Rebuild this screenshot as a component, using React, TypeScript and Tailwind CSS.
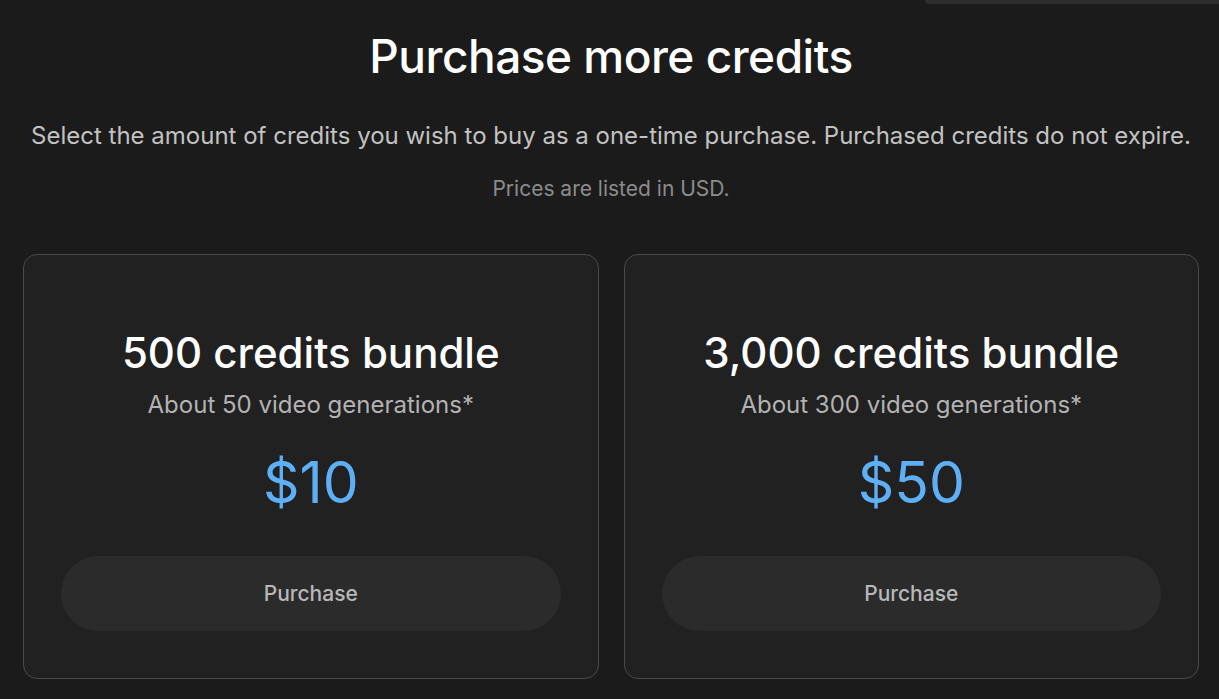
import React from "react";

const bundles = [
  { title: "500 credits bundle", sub: "About 50 video generations*", price: "$10" },
  { title: "3,000 credits bundle", sub: "About 300 video generations*", price: "$50" },
];

export default function App() {
  return (
    <div className="min-h-[699px] bg-[#1b1b1b] font-['Inter',sans-serif] overflow-hidden">
      {/* strip of an element scrolled above */}
      <div className="ml-auto w-[294px] h-[4px] bg-[#2e2e2e] rounded-bl-[6px]" />

      <div className="ml-[23px] w-[1176px] flex flex-col items-center">
        <h1 className="mt-[24px] text-[46px] leading-[56px] font-medium text-white tracking-[-0.5px]">
          Purchase more credits
        </h1>
        <p className="mt-[36px] text-[24px] leading-[32px] text-[#c2c2c2] whitespace-nowrap">
          Select the amount of credits you wish to buy as a one-time purchase. Purchased credits do not expire.
        </p>
        <p className="mt-[25px] text-[21px] leading-[24px] text-[#8c8c8c]">Prices are listed in USD.</p>

        <div className="mt-[53px] w-full grid grid-cols-2 gap-[25px]">
          {bundles.map((b) => (
            <div
              key={b.price}
              className="h-[425px] bg-[#212121] border border-[#4a4a4a] rounded-[14px] px-[37px] pb-[47px] flex flex-col items-center justify-end"
            >
              <h2 className="text-[42px] leading-[50px] font-medium text-white">{b.title}</h2>
              <p className="mt-[11px] text-[24px] leading-[32px] text-[#b3b3b3]">{b.sub}</p>
              <div className="mt-[28px] text-[57px] leading-[68px] text-[#5eb0f6]">{b.price}</div>
              <button className="mt-[39px] w-full h-[75px] rounded-full bg-[#2b2b2b] text-[21px] font-medium text-[#b8b8b8]">
                Purchase
              </button>
            </div>
          ))}
        </div>
      </div>
    </div>
  );
}
